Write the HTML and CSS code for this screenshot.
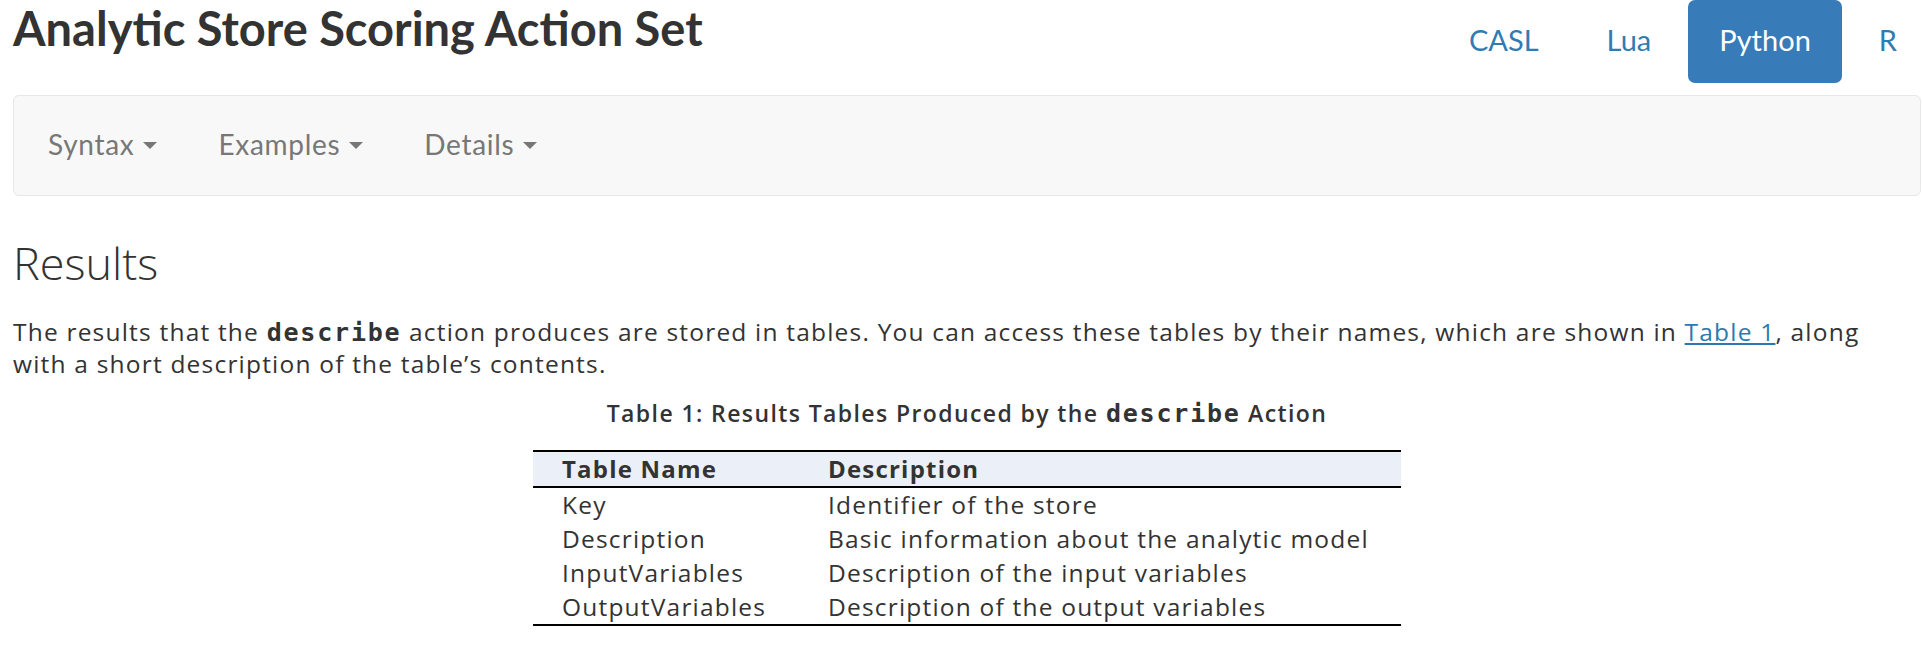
FILE: index.html
```html
<!DOCTYPE html>
<html lang="en">
<head>
<meta charset="utf-8">
<title>Analytic Store Scoring Action Set</title>
<link rel="stylesheet" href="styles.css">
</head>
<body>
<div class="page">
  <header class="top">
    <h1 class="title">Analytic Store Scoring Action Set</h1>
    <ul class="pills">
      <li class="pill">CASL</li>
      <li class="pill">Lua</li>
      <li class="pill active">Python</li>
      <li class="pill">R</li>
    </ul>
  </header>
  <nav class="navbar">
    <span class="nav-item">Syntax <span class="caret"></span></span>
    <span class="nav-item">Examples <span class="caret"></span></span>
    <span class="nav-item">Details <span class="caret"></span></span>
  </nav>
  <h2 class="section">Results</h2>
  <p class="para">The results that the <code class="kw">describe</code> action produces are stored in tables. You can access these tables by their names, which are shown in <a class="link" href="#t1">Table 1</a>, along<br>with a short description of the table’s contents.</p>
  <div class="table-wrap" id="t1">
    <div class="caption">Table 1: Results Tables Produced by the <code class="kw">describe</code> Action</div>
    <table class="results">
      <thead>
        <tr><th class="c1">Table Name</th><th class="c2">Description</th></tr>
      </thead>
      <tbody>
        <tr><td class="c1">Key</td><td class="c2">Identifier of the store</td></tr>
        <tr><td class="c1">Description</td><td class="c2">Basic information about the analytic model</td></tr>
        <tr><td class="c1">InputVariables</td><td class="c2">Description of the input variables</td></tr>
        <tr><td class="c1">OutputVariables</td><td class="c2">Description of the output variables</td></tr>
      </tbody>
    </table>
  </div>
</div>
</body>
</html>
```

FILE: styles.css
```css
html, body {
  margin: 0;
  padding: 0;
  background: #fff;
  overflow: hidden;
}
body {
  font-family: "Open Sans", "Liberation Sans", sans-serif;
  color: #333;
}
.page {
  padding-left: 13px;
  width: 1908px;
}
.top {
  display: flex;
  justify-content: space-between;
  align-items: flex-start;
  height: 83px;
}
.title {
  margin: 0;
  font-family: Lato, "Liberation Sans", sans-serif;
  font-size: 47px;
  font-weight: 700;
  line-height: 56px;
  color: #333;
}
.pills {
  display: flex;
  list-style: none;
  margin: 0 -7px 0 0;
  padding: 0;
  gap: 6px;
}
.pill {
  height: 83px;
  line-height: 80px;
  padding: 0 31px;
  font-family: Lato, "Liberation Sans", sans-serif;
  font-size: 29px;
  color: #2f7cb3;
  border-radius: 7px;
}
.pill.active {
  background: #377bb8;
  color: #fff;
}
.navbar {
  margin-top: 12px;
  box-sizing: border-box;
  height: 101px;
  background: #f8f8f8;
  border: 1px solid #e7e7e7;
  border-radius: 6px;
  display: flex;
  align-items: center;
  padding: 0 0 4px 3px;
}
.nav-item {
  font-family: Lato, "Liberation Sans", sans-serif;
  font-size: 28px;
  letter-spacing: 0.7px;
  color: #777;
  padding: 0 30px 0 31px;
  display: inline-flex;
  align-items: center;
}
.caret {
  display: inline-block;
  width: 0;
  height: 0;
  margin-left: 9px;
  border-left: 7px solid transparent;
  border-right: 7px solid transparent;
  border-top: 7px solid #777;
  margin-top: 4px;
}
.section {
  margin: 39px 0 0 0;
  font-size: 45px;
  font-weight: 300;
  line-height: 56px;
  color: #333;
}
.para {
  margin: 25px 0 0 0;
  width: 1890px;
  font-size: 24.5px;
  letter-spacing: 1.2px;
  line-height: 32px;
}
.kw {
  font-family: "DejaVu Sans Mono", monospace;
  font-weight: 700;
  font-size: 25px;
  letter-spacing: 1.8px;
  line-height: 1;
}
.link {
  color: #2a7ab0;
  text-decoration: underline;
}
.table-wrap {
  display: flex;
  flex-direction: column;
  align-items: center;
  margin-top: 16px;
}
.caption {
  font-size: 23px;
  font-weight: 600;
  letter-spacing: 1.4px;
  line-height: 34px;
}
.results {
  margin-top: 20px;
  width: 868px;
  border-collapse: collapse;
  font-size: 24.5px;
  letter-spacing: 1.2px;
}
.results thead tr {
  background: #ebf0f8;
  border-top: 2px solid #000;
  border-bottom: 2px solid #000;
}
.results tbody tr:last-child {
  border-bottom: 2px solid #000;
}
.results th {
  text-align: left;
  font-size: 24px;
  font-weight: 700;
  letter-spacing: 1.2px;
  height: 34px;
  padding: 0;
  line-height: 32px;
}
.results td {
  padding: 0;
  height: 34px;
  line-height: 34px;
}
.results .c1 {
  padding-left: 29px;
  width: 266px;
}
```
